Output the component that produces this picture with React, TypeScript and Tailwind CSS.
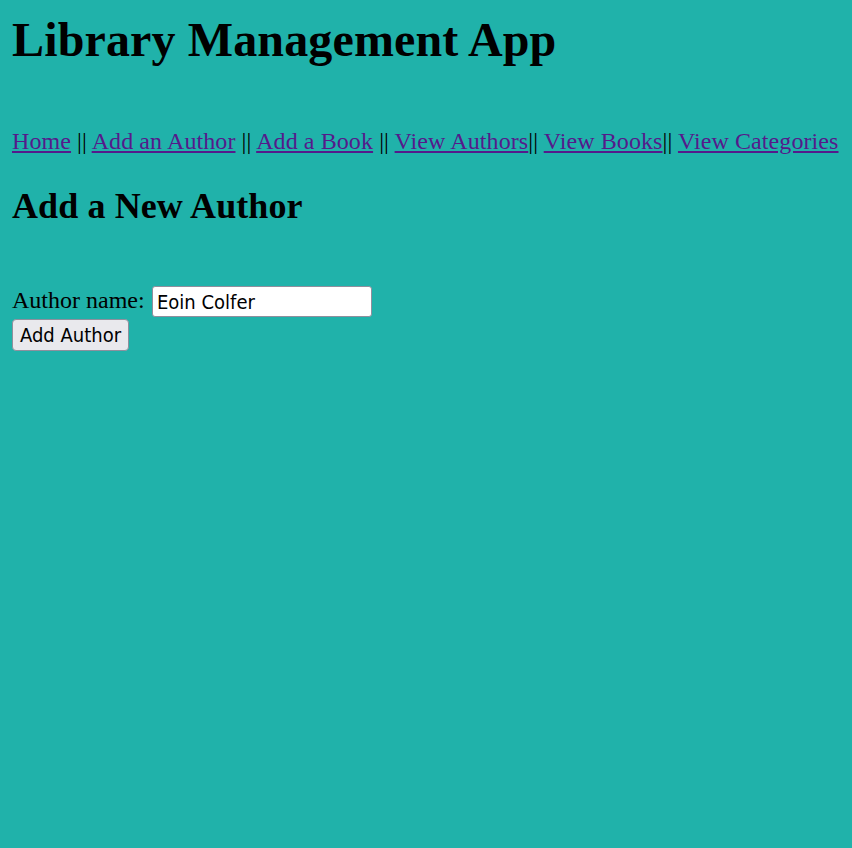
import { useState } from "react";

const navLinks: Array<[string, string]> = [
  ["Home", " || "],
  ["Add an Author", " || "],
  ["Add a Book", " || "],
  ["View Authors", "|| "],
  ["View Books", "|| "],
  ["View Categories", ""],
];

const uiFont = "font-['DejaVu_Sans_Condensed','Liberation_Sans',sans-serif]";

export default function App() {
  const [name, setName] = useState("Eoin Colfer");

  return (
    <div className="min-h-screen bg-[#20b2aa] px-[12px] font-['Liberation_Serif','Times_New_Roman',serif] text-black">
      <h1 className="pt-[16px] text-[48px] font-bold leading-[48px] tracking-[0.14px]">Library Management App</h1>

      <nav className="mt-[65px] whitespace-pre text-[24px] leading-[24px] tracking-[0.09px]">
        {navLinks.map(([label, sep]) => (
          <span key={label}>
            <a href="#" className="text-[#551a8b] underline">
              {label}
            </a>
            {sep}
          </span>
        ))}
      </nav>

      <h2 className="mt-[35px] text-[36px] font-bold leading-[36px] tracking-[0.1px]">Add a New Author</h2>

      <form className="mt-[62px]" onSubmit={(e) => e.preventDefault()}>
        <div className="flex items-start">
          <label htmlFor="author" className="mt-[2px] w-[140px] shrink-0 text-[24px] leading-[24px]">
            Author name:
          </label>
          <input
            id="author"
            value={name}
            onChange={(e) => setName(e.target.value)}
            className={`h-[31px] w-[220px] rounded-[3px] border border-[#8f8f9d] bg-white px-[4px] text-[20px] text-black outline-none ${uiFont}`}
          />
        </div>
        <button
          type="submit"
          className={`mt-[2px] flex h-[32px] w-[117px] items-center justify-center rounded-[4px] border border-[#8f8f9d] bg-[#e9e9ed] text-[20px] text-black ${uiFont}`}
        >
          Add Author
        </button>
      </form>
    </div>
  );
}
